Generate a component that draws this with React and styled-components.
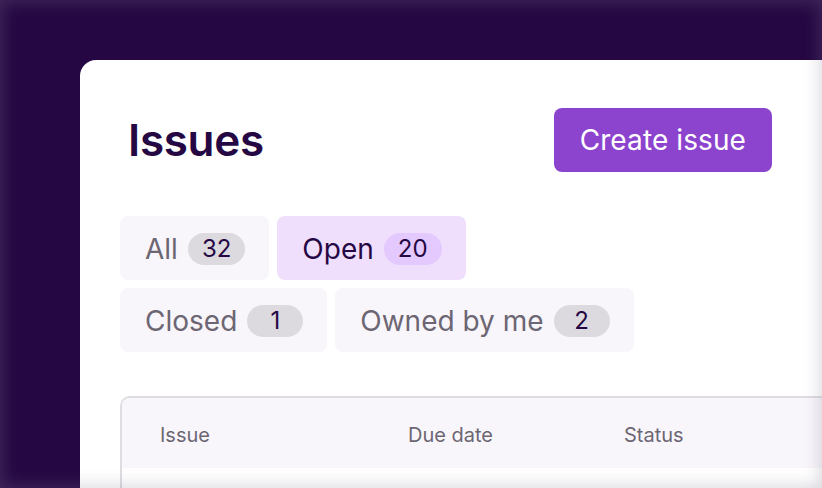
import React from 'react';
import styled, { createGlobalStyle } from 'styled-components';

const GlobalStyle = createGlobalStyle`
  html, body {
    margin: 0;
    padding: 0;
    background: #250843;
    font-family: Inter, "Noto Sans", sans-serif;
    overflow: hidden;
  }
`;

const Page = styled.div`
  width: 822px;
  height: 488px;
  padding: 60px 0 0 80px;
  box-sizing: border-box;
  overflow: hidden;
`;

// soft blurred edge of the zoomed screenshot
const Vignette = styled.div`
  position: fixed;
  inset: 0;
  pointer-events: none;
  box-shadow: inset 0 0 16px 3px rgba(130, 118, 145, 0.28);
`;

const Card = styled.main`
  width: 780px;
  min-height: 460px;
  background: #ffffff;
  border-top-left-radius: 16px;
  padding: 48px 0 0 40px;
  box-sizing: border-box;
`;

const Header = styled.header`
  display: flex;
  align-items: center;
  justify-content: space-between;
  height: 64px;
  padding: 0 88px 0 8px;
`;

const Title = styled.h1`
  margin: 0;
  font-size: 44px;
  font-weight: 600;
  letter-spacing: -0.3px;
  color: #250843;
`;

const PrimaryButton = styled.button`
  height: 64px;
  padding: 0 26px;
  border: none;
  border-radius: 8px;
  background: #8c44cf;
  color: #ffffff;
  font-family: inherit;
  font-size: 28px;
  font-weight: 400;
  letter-spacing: 0.1px;
`;

const TabList = styled.nav`
  display: flex;
  flex-wrap: wrap;
  gap: 8px;
  max-width: 540px;
  margin-top: 44px;
`;

const Tab = styled.button`
  display: flex;
  align-items: center;
  gap: 10px;
  height: 64px;
  padding: 1px 24px 0 25px;
  border: none;
  border-radius: 8px;
  background: ${p => (p.$active ? '#efdffd' : '#f8f5fb')};
  color: ${p => (p.$active ? '#250843' : '#6c6673')};
  font-family: inherit;
  font-size: 28px;
`;

const Count = styled.span`
  display: inline-flex;
  align-items: center;
  justify-content: center;
  min-width: 56px;
  height: 32px;
  padding: 0 14px;
  box-sizing: border-box;
  border-radius: 16px;
  background: ${p => (p.$active ? '#e3c9fd' : '#dcdadf')};
  color: #250843;
  font-size: 24px;
`;

const Table = styled.section`
  margin-top: 44px;
  border: 2px solid #dedce1;
  border-right: none;
  border-bottom: none;
  border-top-left-radius: 10px;
  overflow: hidden;
`;

const HeadRow = styled.div`
  display: grid;
  grid-template-columns: 248px 216px 1fr;
  align-items: center;
  height: 70px;
  padding: 4px 0 0 38px;
  box-sizing: border-box;
  background: #f9f6fb;
`;

const HeadCell = styled.span`
  font-size: 20px;
  color: #6c6673;
`;

const BodyRow = styled.div`
  height: 40px;
  background: #ffffff;
`;

const tabs = [
  { label: 'All', count: 32 },
  { label: 'Open', count: 20, active: true },
  { label: 'Closed', count: 1 },
  { label: 'Owned by me', count: 2 },
];

export default function App() {
  return (
    <>
      <GlobalStyle />
      <Page>
        <Card>
          <Header>
            <Title>Issues</Title>
            <PrimaryButton>Create issue</PrimaryButton>
          </Header>
          <TabList>
            {tabs.map(t => (
              <Tab key={t.label} $active={t.active}>
                {t.label}
                <Count $active={t.active}>{t.count}</Count>
              </Tab>
            ))}
          </TabList>
          <Table>
            <HeadRow>
              <HeadCell>Issue</HeadCell>
              <HeadCell>Due date</HeadCell>
              <HeadCell>Status</HeadCell>
            </HeadRow>
            <BodyRow />
          </Table>
        </Card>
      </Page>
      <Vignette />
    </>
  );
}
